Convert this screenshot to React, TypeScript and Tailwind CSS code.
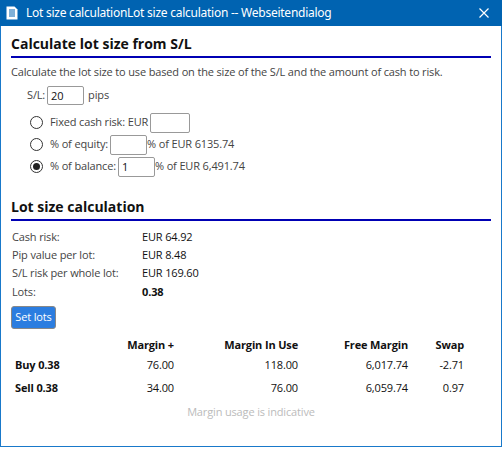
import React, { useState } from 'react';

const font = { fontFamily: '"Open Sans", "Noto Sans", Arial, sans-serif' };

function Radio({ checked }: { checked: boolean }) {
  return (
    <span className="flex h-[13px] w-[13px] items-center justify-center rounded-full border border-[#333] bg-white">
      {checked && <span className="h-[7px] w-[7px] rounded-full bg-[#222]" />}
    </span>
  );
}

function TitleIcon() {
  return (
    <svg width="12" height="14" viewBox="0 0 12 14" className="shrink-0">
      <path d="M0.5 0.5h8l3 3v10h-11z" fill="white" />
      <path d="M3 4h6M3 6h6M3 8h6M3 10h6" stroke="#0063b1" strokeWidth="1" />
    </svg>
  );
}

export default function App() {
  const [sl, setSl] = useState('20');
  const [risk, setRisk] = useState('');
  const [equity, setEquity] = useState('');
  const [balance, setBalance] = useState('1');

  const rows = [
    { label: 'Buy 0.38', m: '76.00', u: '118.00', f: '6,017.74', s: '-2.71', gap: 'mt-[4px]' },
    { label: 'Sell 0.38', m: '34.00', u: '76.00', f: '6,059.74', s: '0.97', gap: 'mt-[6px]' },
  ];

  return (
    <div className="h-[476px] w-[502px] bg-white" style={font}>
      <div className="flex h-[447px] w-[502px] flex-col border border-[#1979ca] border-t-0">
        <div className="-mx-px flex h-[26px] items-center bg-[#0063b1] pl-[6px] pr-[13px] text-white">
          <TitleIcon />
          <span
            className="ml-[8px] flex-1 text-[12px] tracking-[-0.25px]"
            style={{ fontFamily: '"Noto Sans", "Open Sans", sans-serif' }}
          >
            Lot size calculationLot size calculation -- Webseitendialog
          </span>
          <svg width="10" height="10" viewBox="0 0 10 10">
            <path d="M0.5 0.5l9 9M9.5 0.5l-9 9" stroke="white" strokeWidth="1.2" />
          </svg>
        </div>

        <div className="flex flex-col px-[10px] text-[11px] tracking-[-0.15px] text-[#444]">
          <h2 className="mt-[7px] border-b-2 border-[#0000b4] pb-[2px] text-[14px] font-bold tracking-normal text-[#111]">
            Calculate lot size from S/L
          </h2>
          <p className="mt-[6px]">Calculate the lot size to use based on the size of the S/L and the amount of cash to risk.</p>

          <div className="mt-[5px] flex items-center pl-[16px]">
            <span>S/L:</span>
            <input
              value={sl}
              onChange={e => setSl(e.target.value)}
              className="ml-[2px] h-[19px] w-[37px] rounded-[2px] border border-[#999] px-[3px] text-[11px] text-[#111] outline-none"
            />
            <span className="ml-[4px]">pips</span>
          </div>

          <div className="mt-[8px] flex flex-col gap-[2px] pl-[19px]">
            <div className="flex items-center">
              <Radio checked={false} />
              <span className="ml-[7px]">Fixed cash risk: EUR</span>
              <input
                value={risk}
                onChange={e => setRisk(e.target.value)}
                className="ml-[2px] h-[20px] w-[40px] rounded-[2px] border border-[#999] px-[3px] text-[11px] outline-none"
              />
            </div>
            <div className="flex items-center">
              <Radio checked={false} />
              <span className="ml-[7px]">% of equity:</span>
              <input
                value={equity}
                onChange={e => setEquity(e.target.value)}
                className="ml-[2px] h-[20px] w-[37px] rounded-[2px] border border-[#999] px-[3px] text-[11px] outline-none"
              />
              <span>% of EUR 6135.74</span>
            </div>
            <div className="flex items-center">
              <Radio checked={true} />
              <span className="ml-[7px]">% of balance:</span>
              <input
                value={balance}
                onChange={e => setBalance(e.target.value)}
                className="ml-[2px] h-[20px] w-[37px] rounded-[2px] border border-[#999] px-[3px] text-[11px] text-[#111] outline-none"
              />
              <span>% of EUR 6,491.74</span>
            </div>
          </div>

          <h2 className="mt-[19px] border-b-2 border-[#0000b4] pb-[2px] text-[14px] font-bold tracking-normal text-[#111]">
            Lot size calculation
          </h2>

          <div className="mt-[8px] grid grid-cols-[130px_1fr] gap-y-[3px] pl-[1px] leading-[15px]">
            <span>Cash risk:</span>
            <span className="text-[#111]">EUR 64.92</span>
            <span>Pip value per lot:</span>
            <span className="text-[#111]">EUR 8.48</span>
            <span>S/L risk per whole lot:</span>
            <span className="text-[#111]">EUR 169.60</span>
            <span className="mt-[1px]">Lots:</span>
            <span className="mt-[1px] font-bold text-[#111]">0.38</span>
          </div>

          <button className="mt-[7px] h-[23px] w-[45px] self-start rounded-[3px] border border-[#888] bg-[#2b7de0] text-[11px] text-white">
            Set lots
          </button>

          <div className="mt-[8px] grid grid-cols-[55px_108px_124px_110px_56px] text-[11px] text-[#111]">
            <span />
            <span className="text-right font-bold">Margin +</span>
            <span className="text-right font-bold">Margin In Use</span>
            <span className="text-right font-bold">Free Margin</span>
            <span className="text-right font-bold">Swap</span>
            {rows.map(r => (
              <React.Fragment key={r.label}>
                <span className={`${r.gap} pl-[4px] font-bold`}>{r.label}</span>
                <span className={`${r.gap} text-right`}>{r.m}</span>
                <span className={`${r.gap} text-right`}>{r.u}</span>
                <span className={`${r.gap} text-right`}>{r.f}</span>
                <span className={`${r.gap} text-right`}>{r.s}</span>
              </React.Fragment>
            ))}
          </div>

          <p className="mt-[8px] text-center text-[#bbb]">Margin usage is indicative</p>
        </div>
      </div>
    </div>
  );
}
